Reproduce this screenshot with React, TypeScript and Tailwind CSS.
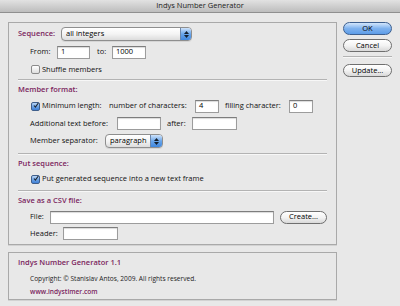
import React from 'react';

const font = { fontFamily: '"Open Sans", "DejaVu Sans", sans-serif' };

const Field = ({ w, value = '' }: { w: string; value?: string }) => (
  <div
    className={`${w} h-[13px] bg-white border border-[#9c9c9c] border-t-[#7d7d7d] shadow-[inset_0_1px_1px_rgba(0,0,0,0.15)] flex items-center px-[3px] text-[7.5px] text-black`}
  >
    {value}
  </div>
);

const Check = ({ checked = false }: { checked?: boolean }) => (
  <div
    className={`w-[9px] h-[9px] rounded-[2px] border flex items-center justify-center ${
      checked
        ? 'border-[#3f5f8c] bg-gradient-to-b from-[#bcd7f5] via-[#6fa4e4] to-[#3e7fd6]'
        : 'border-[#8b8b8b] bg-gradient-to-b from-white to-[#dedede]'
    }`}
  >
    {checked && (
      <svg width="9" height="9" viewBox="0 0 9 9" className="-mt-[2px] ml-[1px]">
        <path d="M1.5 4.5 L3.6 7 L8 0.8" fill="none" stroke="#1b2430" strokeWidth="1.6" />
      </svg>
    )}
  </div>
);

const Popup = ({ w, text, arrowW }: { w: string; text: string; arrowW: string }) => (
  <div className={`${w} h-[14px] rounded-[4px] border border-[#8e8e8e] bg-gradient-to-b from-white via-[#f4f4f4] to-[#dcdcdc] flex items-stretch overflow-hidden shadow-[0_1px_0_rgba(0,0,0,0.08)]`}>
    <div className="flex-1 flex items-center pl-[4px] text-[7.5px] text-black">{text}</div>
    <div className={`${arrowW} bg-gradient-to-b from-[#cfe3fa] via-[#6aa6ea] to-[#3f87de] border-l border-[#6b87ad] flex flex-col items-center justify-center gap-[1px]`}>
      <svg width="5" height="3" viewBox="0 0 5 3"><path d="M0 3 L2.5 0 L5 3Z" fill="#14202f" /></svg>
      <svg width="5" height="3" viewBox="0 0 5 3"><path d="M0 0 L2.5 3 L5 0Z" fill="#14202f" /></svg>
    </div>
  </div>
);

const Button = ({ label, w = 'w-[48px]', primary = false }: { label: string; w?: string; primary?: boolean }) => (
  <div
    className={`${w} h-[13px] rounded-full border flex items-center justify-center text-[7.5px] text-black ${
      primary
        ? 'border-[#3d5f8f] bg-gradient-to-b from-[#d3e6fb] via-[#7fb2ee] to-[#5c9ce8]'
        : 'border-[#6f6f6f] bg-gradient-to-b from-white via-[#f3f3f3] to-[#d9d9d9]'
    }`}
  >
    {label}
  </div>
);

const Heading = ({ children, mt }: { children: React.ReactNode; mt: string }) => (
  <div className={`${mt} h-[12px] flex items-center text-[7.5px] font-semibold text-[#7b1f5e]`}>{children}</div>
);

const Sep = ({ mt }: { mt: string }) => (
  <div className={`${mt} h-[2px] border-t border-[#b3b3b3] border-b border-b-[#f7f7f7]`} />
);

export default function App() {
  return (
    <div className="w-[400px] h-[306px] bg-[#e8e8e8] text-[#111] overflow-hidden" style={font}>
      {/* title bar */}
      <div className="h-[13px] bg-gradient-to-b from-[#e2e2e2] to-[#bdbdbd] border-b border-[#8f8f8f] flex items-center justify-center text-[7.5px] text-[#222]">
        Indys Number Generator
      </div>

      <div className="flex pt-[9px] pl-[8px]">
        <div className="w-[329px] flex flex-col">
          {/* main panel */}
          <div className="border border-[#a9a9a9] shadow-[0_1px_0_#d2d2d2] px-[9px] pt-[4px] pb-[4px] text-[7.5px]">
            <div className="h-[14px] flex items-center">
              <span className="w-[43px] font-semibold text-[#7b1f5e]">Sequence:</span>
              <Popup w="w-[131px]" text="all integers" arrowW="w-[11px]" />
            </div>

            <div className="mt-[4px] h-[14px] flex items-center pl-[12px]">
              <span className="w-[27px]">From:</span>
              <Field w="w-[33px]" value="1" />
              <span className="ml-[7px] w-[15px]">to:</span>
              <Field w="w-[34px]" value="1000" />
            </div>

            <div className="mt-[4px] h-[13px] flex items-center pl-[13px] gap-[1px]">
              <Check />
              <span className="ml-[1px]">Shuffle members</span>
            </div>

            <Sep mt="mt-[3px]" />

            <Heading mt="mt-[3px]">Member format:</Heading>

            <div className="mt-[3px] h-[14px] flex items-center pl-[13px]">
              <Check checked />
              <span className="ml-[2px] w-[67px]">Minimum length:</span>
              <span className="w-[86px]">number of characters:</span>
              <Field w="w-[24px]" value="4" />
              <span className="ml-[6px] w-[64px]">filling character:</span>
              <Field w="w-[24px]" value="0" />
            </div>

            <div className="mt-[4px] h-[13px] flex items-center pl-[12px]">
              <span className="w-[87px]">Additional text before:</span>
              <Field w="w-[44px]" />
              <span className="ml-[6px] w-[25px]">after:</span>
              <Field w="w-[45px]" />
            </div>

            <div className="mt-[4px] h-[14px] flex items-center pl-[12px]">
              <span className="w-[75px]">Member separator:</span>
              <Popup w="w-[58px]" text="paragraph" arrowW="w-[12px]" />
            </div>

            <Sep mt="mt-[5px]" />

            <Heading mt="mt-[3px]">Put sequence:</Heading>

            <div className="mt-[3px] h-[12px] flex items-center pl-[13px]">
              <Check checked />
              <span className="ml-[2px]">Put generated sequence into a new text frame</span>
            </div>

            <Sep mt="mt-[5px]" />

            <Heading mt="mt-[3px]">Save as a CSV file:</Heading>

            <div className="mt-[3px] h-[14px] flex items-center pl-[12px]">
              <span className="w-[20px]">File:</span>
              <Field w="w-[224px]" />
              <div className="ml-[6px]">
                <Button label="Create..." w="w-[47px]" />
              </div>
            </div>

            <div className="mt-[3px] h-[13px] flex items-center pl-[12px]">
              <span className="w-[33px]">Header:</span>
              <Field w="w-[55px]" />
            </div>
          </div>

          {/* about panel */}
          <div className="mt-[7px] h-[48px] border border-[#a9a9a9] shadow-[0_1px_0_#d2d2d2] px-[9px]">
            <div className="mt-[4px] h-[12px] flex items-center text-[7.5px] font-semibold text-[#7b1f5e]">
              Indys Number Generator 1.1
            </div>
            <div className="mt-[4px] h-[12px] flex items-center pl-[12px] text-[6.6px] text-[#222]">
              Copyright: © Stanislav Antos, 2009. All rights reserved.
            </div>
            <div className="mt-[1px] h-[12px] flex items-center pl-[12px] text-[6.6px] font-semibold text-[#7b1f5e]">
              www.indystimer.com
            </div>
          </div>
        </div>

        {/* button column */}
        <div className="ml-[6px] w-[49px] flex flex-col">
          <Button label="OK" w="w-[49px]" primary />
          <div className="mt-[4px]">
            <Button label="Cancel" w="w-[49px]" />
          </div>
          <div className="mt-[4px] h-[2px] border-t border-[#b3b3b3] border-b border-b-[#f7f7f7]" />
          <div className="mt-[6px]">
            <Button label="Update..." w="w-[49px]" />
          </div>
        </div>
      </div>
    </div>
  );
}
